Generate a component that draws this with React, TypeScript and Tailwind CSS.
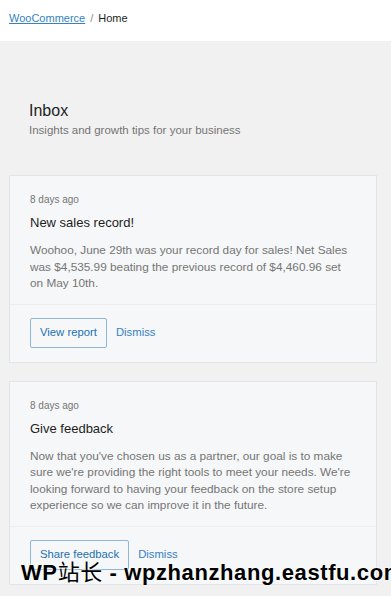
import React from 'react';

const notes = [
  {
    id: 1,
    date: '8 days ago',
    title: 'New sales record!',
    body: 'Woohoo, June 29th was your record day for sales! Net Sales was $4,535.99 beating the previous record of $4,460.96 set on May 10th.',
    action: 'View report',
  },
  {
    id: 2,
    date: '8 days ago',
    title: 'Give feedback',
    body: "Now that you've chosen us as a partner, our goal is to make sure we're providing the right tools to meet your needs. We're looking forward to having your feedback on the store setup experience so we can improve it in the future.",
    action: 'Share feedback',
  },
];

function NoteCard({ note }) {
  return (
    <div className="border border-[#e2e4e7] bg-[#f6f7f8]">
      <div className="pl-5 pr-6 pt-[17px] pb-[12px]">
        <div className="text-[10px] leading-[14px] text-[#757575]">{note.date}</div>
        <h3 className="mt-[7px] text-[13px] leading-[18px] text-[#1e1e1e]">{note.title}</h3>
        <p className="mt-[10px] text-[11.8px] leading-[16.5px] text-[#757575]">{note.body}</p>
      </div>
      <div className="flex items-center gap-[9px] border-t border-[#eceef0] px-5 pt-[13px] pb-[14px]">
        <button className="h-[30px] rounded-[2px] border border-[#8db6d9] bg-[#f6f7f8] px-[9px] text-[11.3px] text-[#2271b1]">
          {note.action}
        </button>
        <button className="text-[11.3px] text-[#3582c4]">Dismiss</button>
      </div>
    </div>
  );
}

export default function App() {
  return (
    <div className="relative h-[596px] w-[391px] overflow-hidden bg-[#f1f1f1] font-['Liberation_Sans',Arial,sans-serif]">
      <header className="h-[41px] bg-white px-[9px] pt-[11px] text-[11px] leading-[14px]">
        <a href="#" className="text-[#3582c4] underline">WooCommerce</a>
        <span className="mx-[5px] text-[#8c8f94]">/</span>
        <span className="text-[#1e1e1e]">Home</span>
      </header>

      <main className="px-[9px] pt-[60px]">
        <div className="px-5">
          <h2 className="text-[16px] leading-[20px] text-[#1e1e1e]">Inbox</h2>
          <p className="mt-[1px] text-[11.5px] leading-[16px] text-[#757575]">
            Insights and growth tips for your business
          </p>
        </div>

        <div className="mt-[37px] flex w-[368px] flex-col gap-[18px]">
          {notes.map((note) => (
            <NoteCard key={note.id} note={note} />
          ))}
        </div>
      </main>

      <div className="absolute left-[21px] top-[561px] whitespace-nowrap font-['Liberation_Sans','Noto_Sans_CJK_SC',sans-serif] text-[22px] font-bold leading-[24px] tracking-[0.6px] text-black [text-shadow:0_0_2px_#fff,0_0_2px_#fff]">
        WP<span className="font-normal">站长</span> - wpzhanzhang.eastfu.com
      </div>
    </div>
  );
}
